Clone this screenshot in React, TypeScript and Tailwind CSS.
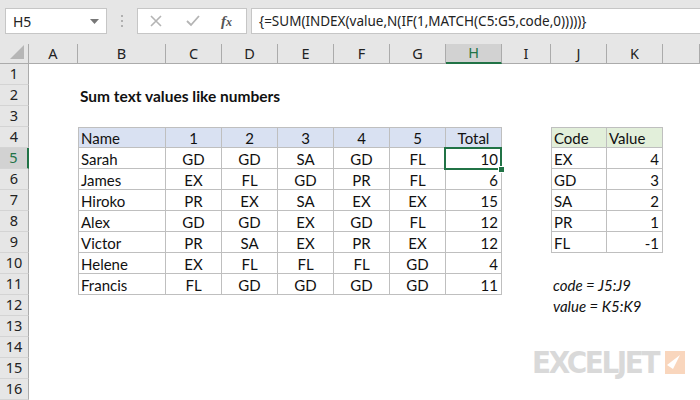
import React from 'react';

type Align = 'left' | 'center' | 'right';

interface CellSpec {
  text?: string;
  align?: Align;
  head?: 'blue' | 'green';
  table?: boolean;
  top?: boolean;
  left?: boolean;
  bold?: boolean;
  italic?: boolean;
  selected?: boolean;
}

const colWidths = [
  'w-[49px]', // A
  'w-[88px]', // B
  'w-[56px]', // C
  'w-[56px]', // D
  'w-[56px]', // E
  'w-[56px]', // F
  'w-[56px]', // G
  'w-[56px]', // H
  'w-[49px]', // I
  'w-[56px]', // J
  'w-[56px]', // K
  'flex-1', // L
];
const colNames = ['A', 'B', 'C', 'D', 'E', 'F', 'G', 'H', 'I', 'J', 'K', ''];

const people: [string, string[], number][] = [
  ['Sarah', ['GD', 'GD', 'SA', 'GD', 'FL'], 10],
  ['James', ['EX', 'FL', 'GD', 'PR', 'FL'], 6],
  ['Hiroko', ['PR', 'EX', 'SA', 'EX', 'EX'], 15],
  ['Alex', ['GD', 'GD', 'EX', 'GD', 'FL'], 12],
  ['Victor', ['PR', 'SA', 'EX', 'PR', 'EX'], 12],
  ['Helene', ['EX', 'FL', 'FL', 'FL', 'GD'], 4],
  ['Francis', ['FL', 'GD', 'GD', 'GD', 'GD'], 11],
];

const codes: [string, number][] = [
  ['EX', 4],
  ['GD', 3],
  ['SA', 2],
  ['PR', 1],
  ['FL', -1],
];

function buildRow(r: number): CellSpec[] {
  const row: CellSpec[] = colNames.map(() => ({}));
  if (r === 2) row[1] = { text: 'Sum text values like numbers', bold: true };
  if (r === 4) {
    row[1] = { text: 'Name', head: 'blue', table: true, top: true, left: true };
    for (let i = 0; i < 5; i++) row[2 + i] = { text: String(i + 1), align: 'center', head: 'blue', table: true, top: true };
    row[7] = { text: 'Total', align: 'center', head: 'blue', table: true, top: true };
    row[9] = { text: 'Code', head: 'green', table: true, top: true, left: true };
    row[10] = { text: 'Value', head: 'green', table: true, top: true };
  }
  if (r >= 5 && r <= 11) {
    const [name, vals, total] = people[r - 5];
    row[1] = { text: name, table: true, left: true };
    vals.forEach((v, i) => (row[2 + i] = { text: v, align: 'center', table: true }));
    row[7] = { text: String(total), align: 'right', table: true, selected: r === 5 };
  }
  if (r >= 5 && r <= 9) {
    const [code, value] = codes[r - 5];
    row[9] = { text: code, table: true, left: true };
    row[10] = { text: String(value), align: 'right', table: true };
  }
  if (r === 11) row[9] = { text: 'code = J5:J9', italic: true };
  if (r === 12) row[9] = { text: 'value = K5:K9', italic: true };
  return row;
}

function Cell({ spec, w }: { spec: CellSpec; w: string }) {
  const align =
    spec.align === 'center' ? 'justify-center' : spec.align === 'right' ? 'justify-end pr-[3px]' : 'justify-start pl-[2px]';
  const bg = spec.head === 'blue' ? 'bg-[#d9e1f2]' : spec.head === 'green' ? 'bg-[#e2efda]' : '';
  const borders = spec.table
    ? `border-[#bfbfbf] border-r border-b ${spec.top ? 'border-t' : ''} ${spec.left ? 'border-l' : ''}`
    : '';
  return (
    <div className={`relative ${w} shrink-0 h-full flex items-center pt-[2px] ${align} ${bg} ${borders}`}>
      {spec.text && (
        <span
          className={`whitespace-nowrap leading-none text-[#111] ${
            spec.bold ? 'font-bold text-[15.5px]' : 'text-[15px]'
          } ${spec.italic ? 'italic' : ''}`}
        >
          {spec.text}
        </span>
      )}
      {spec.selected && (
        <div className="absolute -left-[2px] -top-[1px] -right-[1px] -bottom-[2px] z-10 border-2 border-[#217346]">
          <div className="absolute -right-[5px] -bottom-[5px] h-[7px] w-[7px] bg-[#217346] border border-white" />
        </div>
      )}
    </div>
  );
}

function FormulaBar() {
  return (
    <div className="h-[44px] bg-[#e6e6e6] flex items-start pt-[8px] pl-[5px] font-['Noto_Sans',sans-serif]">
      <div className="w-[102px] h-[26px] bg-white border border-[#c6c6c6] flex items-center justify-between pl-[7px] pr-[7px]">
        <span className="text-[14px] text-[#222]">H5</span>
        <svg width="9" height="5" viewBox="0 0 9 5">
          <path d="M0 0 L9 0 L4.5 5 Z" fill="#777" />
        </svg>
      </div>
      <div className="w-[30px] h-[26px] flex flex-col items-center justify-center gap-[3px]">
        <span className="w-[2px] h-[2px] bg-[#b0b0b0]" />
        <span className="w-[2px] h-[2px] bg-[#b0b0b0]" />
        <span className="w-[2px] h-[2px] bg-[#b0b0b0]" />
      </div>
      <div className="w-[110px] h-[26px] bg-white border border-[#c6c6c6] flex items-center pl-[12px]">
        <svg width="12" height="12" viewBox="0 0 12 12">
          <path d="M1 1 L11 11 M11 1 L1 11" stroke="#b4b4b4" strokeWidth="1.6" />
        </svg>
        <svg width="14" height="12" viewBox="0 0 14 12" className="ml-[24px]">
          <path d="M1 6 L5 10 L13 1" stroke="#b4b4b4" strokeWidth="1.8" fill="none" />
        </svg>
        <span className="ml-[21px] italic text-[15px] text-[#555] font-['Liberation_Serif',serif] font-bold">
          f<span className="text-[12px]">x</span>
        </span>
      </div>
      <div className="ml-[4px] flex-1 h-[26px] bg-white border border-[#c6c6c6] border-r-0 flex items-center pl-[7px]">
        <span className="text-[13.5px] text-[#222] whitespace-nowrap">
          {'{=SUM(INDEX(value,N(IF(1,MATCH(C5:G5,code,0)))))}'}
        </span>
      </div>
    </div>
  );
}

function ColumnHeaders() {
  return (
    <div className="h-[20px] flex bg-[#e6e6e6] font-['Noto_Sans',sans-serif]">
      <div className="w-[29px] shrink-0 h-full border-r border-b border-[#ababab] relative">
        <svg width="14" height="14" viewBox="0 0 14 14" className="absolute right-[4px] bottom-[4px]">
          <path d="M14 0 L14 14 L0 14 Z" fill="#b6b6b6" />
        </svg>
      </div>
      {colNames.map((c, i) => {
        const sel = c === 'H';
        return (
          <div
            key={i}
            className={`${colWidths[i]} shrink-0 h-full flex items-center justify-center text-[14.5px] ${
              sel
                ? 'bg-[#d2d2d2] text-[#217346] border-b-2 border-b-[#217346] border-r border-r-[#ababab]'
                : 'text-[#222] border-b border-[#ababab] border-r'
            }`}
          >
            {c}
          </div>
        );
      })}
    </div>
  );
}

function Logo() {
  return (
    <div className="absolute left-[532px] top-[347px] flex items-center gap-[7px]">
      <span className="font-['DejaVu_Sans_Condensed','DejaVu_Sans',sans-serif] font-bold text-[31px] leading-none tracking-[-2.4px] text-[#d9d9d9]">
        EXCELJET
      </span>
      <div className="w-[20px] h-[23px] bg-[#f9d6bd] relative">
        <svg width="20" height="23" viewBox="0 0 20 23" className="absolute left-0 top-0">
          <path d="M15 4 L2 14 L8 18 Z" fill="#ffffff" />
        </svg>
      </div>
    </div>
  );
}

export default function App() {
  const rows = Array.from({ length: 16 }, (_, i) => i + 1);
  return (
    <div className="relative w-[700px] h-[400px] overflow-hidden bg-white">
      <FormulaBar />
      <ColumnHeaders />
      <div className="font-['Lato','Open_Sans',sans-serif]">
        {rows.map((r) => {
          const spec = buildRow(r);
          const sel = r === 5;
          return (
            <div key={r} className="h-[21px] flex">
              <div
                className={`w-[29px] shrink-0 h-full flex items-center justify-center text-[14.5px] font-['Noto_Sans',sans-serif] border-b border-[#d4d4d4] ${
                  sel
                    ? 'bg-[#d2d2d2] text-[#217346] border-r-2 border-r-[#217346]'
                    : 'bg-[#e6e6e6] text-[#222] border-r border-r-[#ababab]'
                }`}
              >
                {r}
              </div>
              {spec.map((s, i) => (
                <Cell key={i} spec={s} w={colWidths[i]} />
              ))}
            </div>
          );
        })}
      </div>
      <Logo />
    </div>
  );
}
